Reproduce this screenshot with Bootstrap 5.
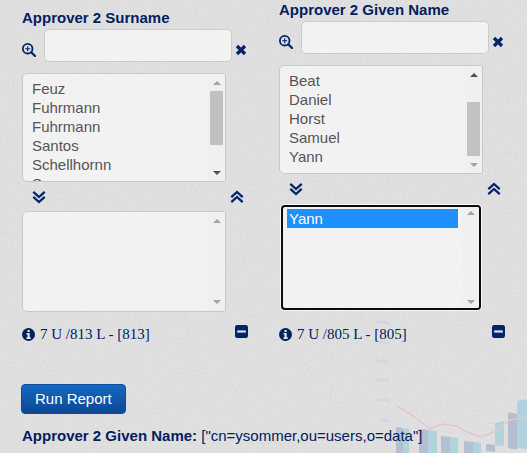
<!DOCTYPE html>
<html lang="en">
<head>
<meta charset="utf-8">
<meta name="viewport" content="width=device-width, initial-scale=1">
<title>Approver report</title>
<link rel="stylesheet" href="https://cdn.jsdelivr.net/npm/bootstrap@5.3.0/dist/css/bootstrap.min.css">
<style>
  body { background: #e0e0e0; color: #00205f; font: 15px/20px "Liberation Sans", Arial, sans-serif; min-height: 100vh; overflow: hidden; }
  .backdrop { position: absolute; inset: 0; z-index: -1; width: 100%; height: 100%; }
  .backdrop-chart { position: absolute; right: 0; bottom: 0; z-index: -1; }
  .page { padding: 0 22px; }
  .filters { gap: 31px; }
  .filter-group { min-width: 0; flex: 1 1 0; }
  .filter-group label { font-weight: 700; }
  .search-line { padding-right: 1px; margin-top: 1px; }
  .search-line .form-control { height: 33px; margin: 0 3px 0 8px; border: 1px solid #ccc; border-radius: 5px; background: rgba(255,255,255,.6); }
  .icon-btn { display: inline-flex; padding: 0; border: 0; background: none; color: #00246b; }
  .listbox { height: 109px; margin: 11px 22px 0 0; border: 1px solid #c8c8c8; border-radius: 5px 2px 2px 5px; background: rgba(255,255,255,.6); overflow: hidden; }
  .listbox select { flex: 1 1 0; min-width: 0; height: 100%; padding: 5px 5px 0 7px; border: 0; outline: 0; background: none; color: #555; font: inherit; appearance: none; overflow: hidden; }
  .listbox option { min-height: 19px; padding: 1px 2px; line-height: 17px; }
  .listbox option:checked { background: linear-gradient(#1e90ff, #1e90ff); color: #fff; -webkit-text-fill-color: #fff; }
  .scrollbar { flex: none; width: 17px; background: #f0f0f0; }
  .listbox.chosen { height: 101px; margin-top: 0; }
  .listbox.active { height: 105px; margin: 2px 24px 14px 2px; border: 2px solid #0b0b10; border-radius: 4px; box-shadow: 0 0 0 1px #f8f8f8; }
  .listbox.active select { padding: 2px 4px 0 4px; }
  .move-line { height: 29px; padding: 0 4px 0 10px; }
  .status-line { height: 20px; margin-top: 12px; font: 15px/20px "Liberation Serif", "Times New Roman", serif; }
  .status-line .icon-btn { margin-bottom: 6px; }
  .status-text { gap: 5px; }
  .run-btn { height: 30px; margin: 40px 0 0 -1px; padding: 0 13px; border: 1px solid #0a4c98; border-radius: 4px; background: linear-gradient(#1568c2, #0a4896); color: #fff; font-size: 15px; line-height: 26px; }
  .run-btn:hover { color: #fff; background: #0a4896; }
</style>
<script src="https://cdn.jsdelivr.net/npm/bootstrap@5.3.0/dist/js/bootstrap.bundle.min.js"></script>
</head>
<body class="position-relative">
<svg class="backdrop" aria-hidden="true">
  <filter id="grain"><feTurbulence type="fractalNoise" baseFrequency=".4" numOctaves="3"/><feColorMatrix values="0 0 0 0 .5  0 0 0 0 .5  0 0 0 0 .5  .35 0 0 0 -.14"/></filter>
  <rect width="100%" height="100%" filter="url(#grain)"/>
</svg>
<svg class="backdrop-chart" width="160" height="140" viewBox="367 313 160 140" aria-hidden="true">
  <defs><filter id="soft"><feGaussianBlur stdDeviation=".7"/></filter></defs>
  <g filter="url(#soft)">
    <g stroke="#d6d6df" stroke-width="3" fill="none"><path d="M376 322h9l4 2M379 342h7l4 2M376 361h9l4 2M376 380h9l4 2M376 400h9l4 2M380 420h6l4 2"/></g>
    <g fill="#b3c0d2"><path d="M396 427l7 1v25h-7zM419 429l9 1v23h-9zM441 436l9 1v16h-9zM464 441l9 1v11h-9zM486 444l9 1v7l-9-1zM508 412l9 2v36l-9-2z"/></g>
    <g fill="#b2d2de"><path d="M403 428l6 1v24h-6zM428 430l9 1v22h-9zM450 437l8 1v15h-8zM473 442l8 1v10h-8zM495 423l9-2v25l-9-1zM517 401l10-2v50l-10-1z"/></g>
    <path d="M397 406l15 9 18 14 12-5 15 2 8 5 15 6 9-3 6-3 15-11 17-3" fill="none" stroke="#e5c6c8" stroke-width="1.5"/>
  </g>
</svg>

<svg class="d-none" aria-hidden="true">
  <symbol id="zoom" viewBox="0 0 14 14"><circle cx="5.7" cy="5.7" r="4.8" fill="none" stroke="currentColor" stroke-width="1.8"/><path d="M9.2 9.2l3.8 3.8" stroke="currentColor" stroke-width="2.3" stroke-linecap="round"/><path d="M3.2 5.7h5M5.7 3.2v5" stroke="currentColor" stroke-width="1.1"/></symbol>
  <symbol id="times" viewBox="0 0 12 12"><path d="M2 2l8 8M10 2L2 10" stroke="currentColor" stroke-width="3.2"/></symbol>
  <symbol id="down" viewBox="0 0 14 14"><path d="M1.3 1.8L7 7l5.7-5.2M1.3 6.8L7 12l5.7-5.2" fill="none" stroke="currentColor" stroke-width="2.3"/></symbol>
  <symbol id="up" viewBox="0 0 14 14"><path d="M1.3 7.2L7 2l5.7 5.2M1.3 12.2L7 7l5.7 5.2" fill="none" stroke="currentColor" stroke-width="2.3"/></symbol>
  <symbol id="info" viewBox="0 0 13 13"><circle cx="6.5" cy="6.5" r="6.5" fill="currentColor"/><path d="M5.5 2h2.2v2H5.5zM4.5 5h3.2v4.3h1V11H4.5V9.3h1V6.6h-1z" fill="#e4e4e4"/></symbol>
  <symbol id="minus" viewBox="0 0 13 13"><rect width="13" height="13" rx="2.2" fill="currentColor"/><path d="M2.2 6.5h8.6" stroke="#e4e4e4" stroke-width="2.2"/></symbol>
</svg>

<main class="page">
  <form>
    <div class="filters d-flex">
      <section class="filter-group pt-2">
        <label for="surname-search" class="d-block">Approver 2 Surname</label>
        <div class="search-line d-flex align-items-center">
          <button type="button" class="icon-btn mt-2" aria-label="Search surnames"><svg width="14" height="14"><use href="#zoom"/></svg></button>
          <input type="text" class="form-control" id="surname-search">
          <button type="button" class="icon-btn mt-2" aria-label="Clear"><svg width="12" height="12"><use href="#times"/></svg></button>
        </div>
        <div class="listbox d-flex">
          <select multiple aria-label="Available surnames"><option>Feuz</option><option>Fuhrmann</option><option>Fuhrmann</option><option>Santos</option><option>Schellhornn</option><option>Sommer</option></select>
          <svg class="scrollbar" aria-hidden="true"><path d="M5 11l4-4 4 4z" fill="#a3a3a3"/><path d="M2 17h13v54H2z" fill="#c1c1c1"/><path d="M5 97l4 4 4-4z" fill="#505050"/></svg>
        </div>
        <div class="move-line d-flex justify-content-between align-items-center">
          <button type="button" class="icon-btn" aria-label="Add"><svg width="14" height="14"><use href="#down"/></svg></button>
          <button type="button" class="icon-btn" aria-label="Remove"><svg width="14" height="14"><use href="#up"/></svg></button>
        </div>
        <div class="listbox chosen d-flex">
          <select multiple aria-label="Chosen surnames"></select>
          <svg class="scrollbar" aria-hidden="true"><path d="M5 11l4-4 4 4zM5 88l4 4 4-4z" fill="#a3a3a3"/></svg>
        </div>
        <div class="status-line d-flex align-items-center justify-content-between">
          <span class="status-text d-flex align-items-center"><svg width="13" height="13"><use href="#info"/></svg><span>7 U /813 L - [813]</span></span>
          <button type="button" class="icon-btn" aria-label="Collapse surname"><svg width="13" height="13"><use href="#minus"/></svg></button>
        </div>
      </section>

      <section class="filter-group">
        <label for="given-search" class="d-block">Approver 2 Given Name</label>
        <div class="search-line d-flex align-items-center">
          <button type="button" class="icon-btn mt-2" aria-label="Search given names"><svg width="14" height="14"><use href="#zoom"/></svg></button>
          <input type="text" class="form-control" id="given-search">
          <button type="button" class="icon-btn mt-2" aria-label="Clear"><svg width="12" height="12"><use href="#times"/></svg></button>
        </div>
        <div class="listbox d-flex">
          <select multiple aria-label="Available given names"><option>Beat</option><option>Daniel</option><option>Horst</option><option>Samuel</option><option>Yann</option></select>
          <svg class="scrollbar" aria-hidden="true"><path d="M5 11l4-4 4 4z" fill="#505050"/><path d="M2 36h13v54H2z" fill="#c1c1c1"/><path d="M5 97l4 4 4-4z" fill="#a3a3a3"/></svg>
        </div>
        <div class="move-line d-flex justify-content-between align-items-center">
          <button type="button" class="icon-btn" aria-label="Add"><svg width="14" height="14"><use href="#down"/></svg></button>
          <button type="button" class="icon-btn" aria-label="Remove"><svg width="14" height="14"><use href="#up"/></svg></button>
        </div>
        <div class="listbox chosen active d-flex">
          <select multiple aria-label="Chosen given names"><option selected>Yann</option></select>
          <svg class="scrollbar" aria-hidden="true"><path d="M5 8l4-4 4 4zM5 93l4 4 4-4z" fill="#a3a3a3"/></svg>
        </div>
        <div class="status-line d-flex align-items-center justify-content-between">
          <span class="status-text d-flex align-items-center"><svg width="13" height="13"><use href="#info"/></svg><span>7 U /805 L - [805]</span></span>
          <button type="button" class="icon-btn" aria-label="Collapse given name"><svg width="13" height="13"><use href="#minus"/></svg></button>
        </div>
      </section>
    </div>
    <button type="button" class="btn run-btn">Run Report</button>
  </form>
  <p class="mb-0 mt-2 pt-1"><strong>Approver 2 Given Name:</strong> ["cn=ysommer,ou=users,o=data"]</p>
</main>
</body>
</html>
